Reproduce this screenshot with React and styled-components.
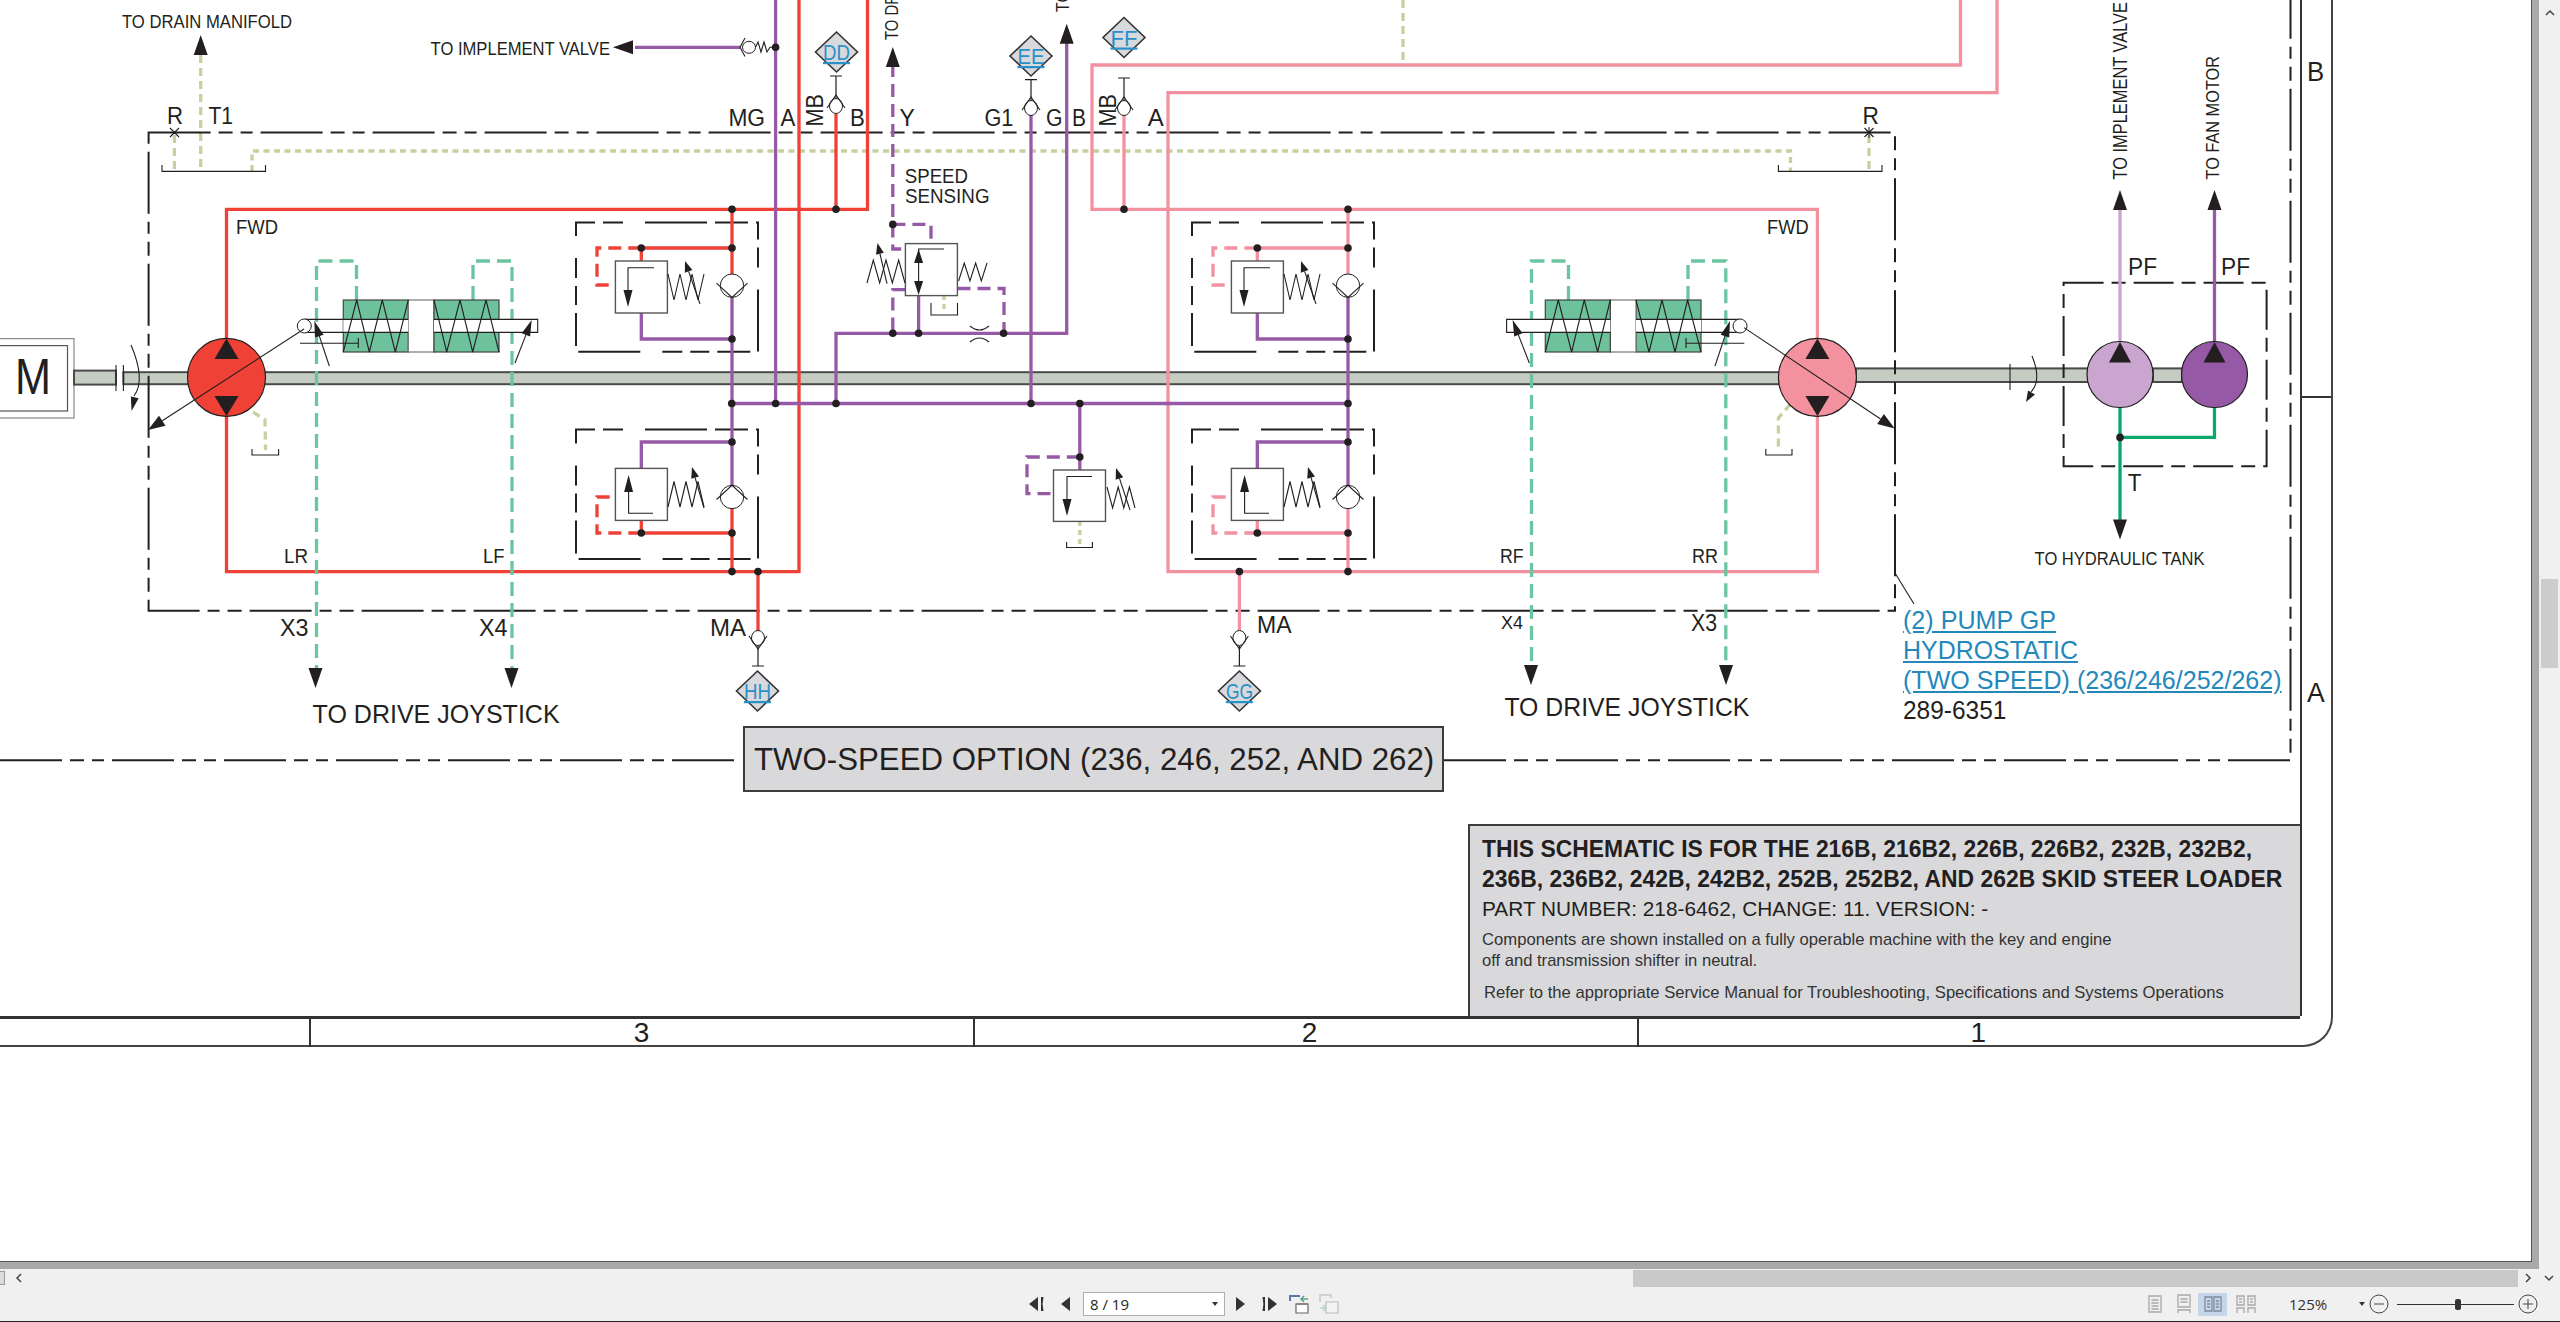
import { useLayoutEffect, useRef } from "react";
import styled, { createGlobalStyle } from "styled-components";

const Global = createGlobalStyle`
  html, body {
    margin: 0;
    height: 100%;
    overflow: hidden;
  }
  #root {
    height: 100%;
  }
`;

const tones = {
  red: "#ef4136",
  pink: "#f4919f",
  purple: "#9659a6",
  lilac: "#c9a5cf",
  teal: "#6cc5a1",
  olive: "#c5d19f",
  green: "#0aa86b",
  ink: "#231f20",
};

/* ---------- window shell ---------- */

const Page = styled.div`
  width: 2560px;
  height: 1322px;
  display: flex;
  flex-direction: column;
  background: #f0f0f0;
  font-family: "Liberation Sans", Arial, sans-serif;
  color: #231f20;
`;

const Workspace = styled.div`
  height: 1269px;
  display: flex;
`;

const Viewer = styled.div`
  width: 2539px;
  height: 1269px;
  box-sizing: border-box;
  background: #fff;
  overflow: hidden;
  border-right: 7px solid #a9a9a9;
  border-bottom: 7px solid #a9a9a9;
`;

const Paper = styled.div`
  width: 2532px;
  height: 1262px;
  box-sizing: border-box;
  background: #fff;
  border-right: 1px solid #555;
  border-bottom: 1px solid #555;
  overflow: hidden;
`;

const Sheet = styled.div`
  width: 2333px;
  height: 1047px;
  box-sizing: border-box;
  display: grid;
  grid-template-columns: 2300px 1fr;
  grid-template-rows: 1016px 1fr;
  border-right: 2px solid #444;
  border-bottom: 2px solid #444;
  border-bottom-right-radius: 30px;
`;

const Canvas = styled.div`
  position: relative;
  width: 2300px;
  height: 1016px;
`;

const Schematic = styled.svg`
  display: block;
  font-family: "Liberation Sans", Arial, sans-serif;
`;

const ZoneColumn = styled.div`
  display: grid;
  grid-template-rows: 398px 1fr;
  border-left: 2px solid #333;
`;

const ZoneRow = styled.div`
  box-sizing: border-box;
  padding-top: ${(p) => p.$top}px;
  height: ${(p) => p.$h}px;
  border-bottom: ${(p) => (p.$line ? "2px solid #333" : "none")};
  text-align: center;
  font-size: 28px;
  line-height: 28px;
`;

const ZoneStrip = styled.div`
  display: grid;
  grid-template-columns: 308.5px 664px 664px 1fr;
  border-top: 3px solid #333;
`;

const ZoneCell = styled.div`
  box-sizing: border-box;
  border-left: ${(p) => (p.$first ? "none" : "2px solid #333")};
  padding-left: ${(p) => p.$pad || 0}px;
  text-align: center;
  font-size: 28px;
  line-height: 28px;
`;

const Fit = styled.span`
  display: inline-block;
  white-space: nowrap;
  transform-origin: 0 50%;
  text-decoration: inherit;
`;

// squeezes a line to the width it has on the sheet, the pdf text runs narrow
function FitText({ width, children }) {
  const ref = useRef(null);
  useLayoutEffect(() => {
    const el = ref.current;
    el.style.transform = `scaleX(${width / el.offsetWidth})`;
  }, [width]);
  return <Fit ref={ref}>{children}</Fit>;
}

const OptionTitle = styled.div`
  position: absolute;
  left: 743px;
  top: 726px;
  width: 701px;
  height: 66px;
  box-sizing: border-box;
  padding-left: 9px;
  display: flex;
  align-items: center;
  background: #d9d9dc;
  border: 2.5px solid #3c3c3c;
  font-size: 32px;
`;

const PartLinks = styled.div`
  position: absolute;
  left: 1903px;
  top: 605px;
  font-size: 26px;
  line-height: 30px;
`;

const PartLink = styled.a`
  display: block;
  color: #2488bb;
  text-decoration: underline;
`;

const PartNumber = styled.div`
  color: #231f20;
`;

const InfoPanel = styled.div`
  position: absolute;
  left: 1468px;
  top: 823.5px;
  right: 0;
  bottom: 0;
  box-sizing: border-box;
  padding: 8px 0 0 12px;
  background: #d9d9dc;
  border: 2.5px solid #3c3c3c;
  border-bottom: none;
  border-right: none;
  color: #231f20;
`;

const InfoHead = styled.div`
  font-size: 23px;
  font-weight: bold;
  line-height: 30px;
`;

const InfoPart = styled.div`
  font-size: 21px;
  line-height: 30px;
`;

const InfoNote = styled.div`
  font-size: 17px;
  line-height: 21.5px;
  color: #333;
  margin-top: ${(p) => p.$gap || 0}px;
  margin-left: ${(p) => p.$indent || 0}px;
`;

/* ---------- scrollbars and toolbar ---------- */

const VScroll = styled.div`
  flex: 1;
  display: flex;
  flex-direction: column;
  align-items: center;
`;

const VThumb = styled.div`
  width: 17px;
  height: 89px;
  margin-top: 561px;
  background: #cdcdcd;
`;

const HScroll = styled.div`
  height: 18px;
  display: flex;
  align-items: center;
  background: #f0f0f0;
`;

const HStub = styled.div`
  width: 5px;
  height: 14px;
  box-sizing: border-box;
  background: #dcdcdc;
  border: 1px solid #999;
  border-left: none;
`;

const HThumb = styled.div`
  width: 885px;
  height: 17px;
  margin-left: auto;
  background: #c9c9c9;
`;

const Chevron = styled.svg`
  display: block;
  flex: none;
  margin: ${(p) => p.$margin || 0};
`;

const Toolbar = styled.div`
  height: 35px;
  box-sizing: border-box;
  display: flex;
  align-items: center;
  padding-left: 1029px;
  border-bottom: 1px solid #222;
`;

const Glyph = styled.svg`
  display: block;
  flex: none;
  margin-left: ${(p) => p.$left || 0}px;
`;

const PageSelect = styled.div`
  width: 142px;
  height: 24px;
  margin-left: 12px;
  box-sizing: border-box;
  padding: 0 6px;
  display: flex;
  align-items: center;
  justify-content: space-between;
  background: #fff;
  border: 1px solid #adadad;
  font-family: "Open Sans", "Noto Sans", sans-serif;
  font-size: 15px;
`;

const Caret = styled.span`
  width: 0;
  height: 0;
  border-left: 3.5px solid transparent;
  border-right: 3.5px solid transparent;
  border-top: 4px solid #333;
`;

const ViewToggle = styled.div`
  width: 29px;
  height: 23px;
  margin-left: ${(p) => p.$left || 0}px;
  display: flex;
  align-items: center;
  justify-content: center;
  background: ${(p) => (p.$on ? "#c5d6ea" : "transparent")};
`;

const ZoomValue = styled.div`
  margin-left: 29px;
  width: 70px;
  font-family: "Open Sans", "Noto Sans", sans-serif;
  font-size: 15px;
  color: #333;
`;

const ZoomTrack = styled.div`
  width: 117px;
  height: 1px;
  margin-left: 8px;
  background: #333;
  display: flex;
  align-items: center;
`;

const ZoomKnob = styled.div`
  width: 6px;
  height: 11px;
  margin-left: 58px;
  border-radius: 2px;
  background: #333;
`;

/* ---------- schematic parts ---------- */

const Pipe = styled.polyline`
  fill: none;
  stroke: ${(p) => tones[p.$tone || "ink"]};
  stroke-width: ${(p) => p.$w || 3.3};
  stroke-dasharray: ${(p) => p.$dash || "none"};
`;

const Thin = styled.path`
  fill: none;
  stroke: ${tones.ink};
  stroke-width: ${(p) => p.$w || 1.1};
`;

const Head = styled.polygon`
  fill: ${tones.ink};
`;

const Node = styled.circle`
  fill: ${tones.ink};
`;

const Bore = styled.ellipse`
  fill: #fff;
  stroke: ${tones.ink};
  stroke-width: 1;
`;

const Rotor = styled.ellipse`
  fill: ${(p) => p.$fill};
  stroke: ${tones.ink};
  stroke-width: 1.2;
`;

const Shaft = styled.rect`
  fill: #c5cdc3;
  stroke: #4a4a4a;
  stroke-width: 2;
`;

const Frame = styled.rect`
  fill: none;
  stroke: ${tones.ink};
  stroke-width: 2;
  stroke-dasharray: ${(p) => p.$dash};
`;

const ValveBody = styled.rect`
  fill: #fff;
  stroke: #555;
  stroke-width: 1.4;
`;

const Box = styled.rect`
  fill: ${(p) => p.$fill || "#fff"};
  stroke: ${(p) => p.$stroke || "none"};
  stroke-width: 1.2;
`;

const Label = styled.text`
  fill: ${tones.ink};
  font-size: ${(p) => p.$size}px;
`;

const TagText = styled.text`
  fill: #2a90c8;
  font-size: 22px;
  text-decoration: underline;
  text-anchor: middle;
`;

const TagShape = styled.polygon`
  fill: #d8d9dc;
  stroke: #333;
  stroke-width: 1.6;
`;

const BOX_DASH = "62 8 14 8 12 8";
const UNIT_DASH = "19 8 20 22 62 8 33 8";
const PILOT = "13 7";
const TEAL = "14 7";
const DRAIN = "6 4.5";

const points = (...list) => list.map((p) => p.join(",")).join(" ");

function Arrow({ x1, y1, x2, y2, len = 20, half = 7, shaft }) {
  const d = Math.hypot(x2 - x1, y2 - y1);
  const ux = (x2 - x1) / d;
  const uy = (y2 - y1) / d;
  const bx = x2 - ux * len;
  const by = y2 - uy * len;
  return (
    <>
      {shaft && <Thin d={`M${x1} ${y1}L${bx} ${by}`} />}
      <Head points={points([x2, y2], [bx - uy * half, by + ux * half], [bx + uy * half, by - ux * half])} />
    </>
  );
}

function Spring({ x1, x2, y1, y2, n = 7 }) {
  const list = Array.from({ length: n }, (_, i) => [x1 + ((x2 - x1) * i) / (n - 1), i % 2 ? y2 : y1]);
  return <Thin d={"M" + list.map((p) => p.join(" ")).join("L")} />;
}

function Tag({ x, y, text }) {
  return (
    <>
      <TagShape points={points([x, y - 20], [x + 21, y], [x, y + 20], [x - 21, y])} />
      <TagText x={x} y={y + 8} textLength="27" lengthAdjust="spacingAndGlyphs">
        {text}
      </TagText>
    </>
  );
}

// test point: stem with a tick and the little check ball, dir -1 goes up the sheet
function TestPort({ x, y, dir, tick }) {
  return (
    <>
      <Thin d={`M${x} ${y + dir * 8}L${x} ${tick}M${x - 6} ${tick}L${x + 6} ${tick}`} $w={1.2} />
      <Bore cx={x} cy={y} rx={6.5} ry={7.5} />
      <Thin d={`M${x - 9} ${y - dir * 2}L${x} ${y + dir * 11}L${x + 9} ${y - dir * 2}`} />
    </>
  );
}

function Check({ x, y, up }) {
  const s = up ? -1 : 1;
  return (
    <>
      <Bore cx={x} cy={y} rx={11.7} ry={11.7} />
      <Thin d={`M${x - 15.5} ${y - s * 2.5}L${x} ${y + s * 11.7}L${x + 15.5} ${y - s * 2.5}`} />
    </>
  );
}

function UpperRelief({ dx, tone }) {
  return (
    <g transform={`translate(${dx} 0)`}>
      <Frame x={576} y={222.4} width={182} height={129.3} $dash={UNIT_DASH} />
      <Pipe $tone={tone} points="732,209 732,274" />
      <Pipe $tone={tone} points="641.3,248 732,248" />
      <Pipe $tone={tone} points="641.3,248 641.3,261" />
      <Pipe $tone={tone} $dash={PILOT} points="641.3,248 597,248 597,285 614,285" />
      <Pipe $tone="purple" points="732,297 732,403.5" />
      <Pipe $tone="purple" points="641.3,313 641.3,339 732,339" />
      <ValveBody x={615.4} y={261} width={52} height={52} />
      <Thin d="M654 267.7L628 267.7L628 292" />
      <Arrow x1={628} y1={270} x2={628} y2={307} len={17} half={4.5} />
      <Spring x1={668} x2={704} y1={274} y2={300} />
      <Arrow x1={700} y1={304} x2={685} y2={261} len={11} half={4} shaft />
      <Check x={732} y={285.7} />
      <Node cx={732} cy={209.3} r={3.8} />
      <Node cx={732} cy={248} r={3.8} />
      <Node cx={641.3} cy={248} r={3.8} />
      <Node cx={732} cy={339} r={3.8} />
    </g>
  );
}

function LowerRelief({ dx, tone }) {
  return (
    <g transform={`translate(${dx} 0)`}>
      <Frame x={576} y={429.4} width={182} height={129.6} $dash={UNIT_DASH} />
      <Pipe $tone="purple" points="732,403.5 732,486" />
      <Pipe $tone="purple" points="641.3,468 641.3,442 732,442" />
      <Pipe $tone={tone} points="732,508 732,571.6" />
      <Pipe $tone={tone} points="641.3,520 641.3,533 732,533" />
      <Pipe $tone={tone} $dash={PILOT} points="641.3,533 597,533 597,497 614,497" />
      <ValveBody x={615.4} y={468.4} width={52} height={52} />
      <Thin d="M653 513.3L628.6 513.3L628.6 490" />
      <Arrow x1={628.6} y1={510} x2={628.6} y2={475} len={17} half={4.5} />
      <Spring x1={668} x2={704} y1={507} y2={481.5} />
      <Arrow x1={704} y1={508} x2={692} y2={467} len={11} half={4} shaft />
      <Check x={732} y={497} up />
      <Node cx={732} cy={442} r={3.8} />
      <Node cx={732} cy={533} r={3.8} />
      <Node cx={641.3} cy={533} r={3.8} />
      <Node cx={732} cy={571.6} r={3.8} />
    </g>
  );
}

function Cylinder({ mirror }) {
  return (
    <g transform={mirror ? "translate(2044.3 0) scale(-1 1)" : undefined}>
      <Box x={343.3} y={300} width={65} height={52} $fill="#6dc19b" $stroke="#444" />
      <Box x={408.3} y={300} width={25.7} height={52} $stroke="#777" />
      <Box x={434} y={300} width={65} height={52} $fill="#6dc19b" $stroke="#444" />
      <Box x={343.3} y={319.4} width={65} height={13} />
      <Box x={434} y={319.4} width={103.7} height={13} />
      <Thin d="M304.3 319.4L408.3 319.4M304.3 332.4L408.3 332.4M434 319.4L537.7 319.4L537.7 332.4L434 332.4" />
      <Thin d="M343.3 352L356.7 300L369.3 352L382.3 300L395.3 352L408.3 300" />
      <Thin d="M434 300L446.7 352L460 300L472.7 352L486 300L499 352" />
      <Thin d="M300 343.3L358.3 343.3M358.3 338L358.3 348" />
      <Bore cx={304.3} cy={326} rx={7} ry={7} />
      <Arrow x1={329.3} y1={366} x2={314.3} y2={321} len={16} half={4.5} shaft />
      <Arrow x1={515} y1={363} x2={531.7} y2={320} len={16} half={4.5} shaft />
    </g>
  );
}

function Pump({ x, fill }) {
  return (
    <>
      <Rotor cx={x} cy={377.4} rx={39} ry={39} $fill={fill} />
      <Head points={points([x, 338.6], [x + 12, 359], [x - 12, 359])} />
      <Head points={points([x, 416], [x + 12, 396], [x - 12, 396])} />
    </>
  );
}

const labels = [
  ["TO DRAIN MANIFOLD", 122, 21, 19, 170],
  ["TO IMPLEMENT VALVE", 430.6, 48, 19, 179.4],
  ["R", 167, 116, 23, 16],
  ["T1", 208.4, 116, 23, 24.6],
  ["MG", 728.4, 117.5, 23, 36.7],
  ["A", 780.5, 118, 23, 14.8],
  ["B", 850, 118, 23, 14.8],
  ["Y", 899.4, 118, 23, 15.3],
  ["G1", 984.4, 118, 23, 29],
  ["G", 1046, 118, 23, 16.5],
  ["B", 1072, 118, 23, 14],
  ["A", 1147.8, 118, 23, 16],
  ["R", 1862.4, 116, 23, 16.4],
  ["SPEED", 904.8, 175.4, 20, 63.2],
  ["SENSING", 905, 196, 20, 84.5],
  ["FWD", 236, 226.5, 19.5, 42],
  ["FWD", 1767, 227, 19.5, 41.6],
  ["LR", 284, 555.7, 19.5, 24],
  ["LF", 483, 555.7, 19.5, 21.6],
  ["RF", 1500, 555.7, 19.5, 23.6],
  ["RR", 1692, 555.7, 19.5, 26],
  ["X3", 280, 628, 23, 28.5],
  ["X4", 479, 628, 23, 28.5],
  ["MA", 710, 628, 23, 36],
  ["MA", 1257, 625, 23, 34.5],
  ["X4", 1501, 622.7, 18, 22],
  ["X3", 1691, 622.7, 23, 26],
  ["TO DRIVE JOYSTICK", 312.6, 714, 25, 247],
  ["TO DRIVE JOYSTICK", 1504.4, 707, 25, 245],
  ["PF", 2128, 266.4, 23, 29],
  ["PF", 2221, 266.4, 23, 29],
  ["T", 2127.8, 482.7, 23, 13.7],
  ["TO HYDRAULIC TANK", 2034.6, 557.8, 19, 170],
];

const risers = [
  ["MB", 822.7, 126.5, 24, 32.5],
  ["MB", 1116, 126.5, 24, 32.5],
  ["TO DRIVE JOYSTICK", 898, 40, 18, 147],
  ["TO FAN MOTOR", 1069.4, 12, 18, 120],
  ["TO IMPLEMENT VALVE", 2126.7, 179.5, 20, 177.5],
  ["TO FAN MOTOR", 2219.4, 179.5, 19, 123.5],
];

function Diagram() {
  return (
    <Schematic width="2300" height="1016" viewBox="0 0 2300 1016">
      {/* motor and drive shafts */}
      <Box x={-2} y={338.6} width={76} height={79.4} $stroke="#888" />
      <Box x={-2} y={345.6} width={69.5} height={65.4} $stroke="#555" />
      <Label $size={50} x={15} y={394} textLength="36" lengthAdjust="spacingAndGlyphs">M</Label>
      <Shaft x={74} y={370.6} width={42} height={14} />
      <Shaft x={123.4} y={372.2} width={70} height={12} />
      <Shaft x={262} y={372.2} width={1526} height={12} />
      <Shaft x={1856} y={368.4} width={232} height={13.6} />
      <Shaft x={2153} y={368.4} width={29} height={13.6} />
      <Thin d="M116 365L116 391M123.4 365L123.4 391M2010 364L2010 390" />
      <Thin d="M131 345Q146 380 134 396" />
      <Arrow x1={136} y1={392} x2={131.6} y2={411} len={14} half={4} />
      <Thin d="M2032 356Q2042 380 2031 392" />
      <Arrow x1={2033} y1={390} x2={2026} y2={402} len={11} half={4} />

      {/* case drain */}
      <Pipe $tone="olive" $dash={DRAIN} points="252,171 252,151 1790.5,151 1790.5,171" />
      <Pipe $tone="olive" $dash="8 5" points="174.4,135 174.4,171" />
      <Pipe $tone="olive" $dash="8 5" points="200.7,55 200.7,171" />
      <Pipe $tone="olive" $dash="8 5" points="1869,135 1869,171" />
      <Pipe $tone="olive" $dash="8 5" points="1403,0 1403,65" />
      <Pipe $tone="olive" $dash="8 5" points="253,412 265,420 265.5,450" />
      <Pipe $tone="olive" $dash="8 5" points="1790.5,404 1778.4,418 1778.4,450" />
      <Pipe $tone="olive" $dash="5 4" points="944,295 944,309" />
      <Pipe $tone="olive" $dash="5 4" points="1079.8,521 1079.8,546" />
      <Thin d="M162 165L162 171.4L265.5 171.4L265.5 165M1778.4 165L1778.4 171.4L1882 171.4L1882 165" />
      <Thin d="M252 449L252 455L278.6 455L278.6 449M1765.8 449L1765.8 455L1792 455L1792 449" />
      <Thin d="M931 303L931 315L957.5 315L957.5 303M1066.6 542L1066.6 547.5L1092.4 547.5L1092.4 542" />
      <Arrow x1={200.7} y1={60} x2={200.7} y2={35} />
      <Thin d="M170 128L179 137M179 128L170 137M1864.5 128L1873.5 137M1873.5 128L1864.5 137M1869 127L1869 138" />

      {/* machine outline */}
      <Frame x={148.6} y={132.6} width={1746.4} height={478.2} $dash={BOX_DASH} />
      <Frame x={2063.6} y={282.7} width={203} height={183.6} $dash="40 8 14 8" />
      <Pipe $w={2} $dash={BOX_DASH} points="0,760.3 742,760.3" />
      <Pipe $w={2} $dash={BOX_DASH} points="1444,760.3 2290.5,760.3 2290.5,0" />
      <Thin d="M1895 573L1914 604" />

      {/* pressure loops */}
      <Pipe $tone="red" points="226.5,340 226.5,209.3 867.5,209.3 867.5,0" />
      <Pipe $tone="red" points="226.5,415 226.5,571.6 799,571.6 799,0" />
      <Pipe $tone="red" points="836,209.3 836,114" />
      <Pipe $tone="red" points="758,571.6 758,631" />
      <Pipe $tone="pink" points="1817.4,340 1817.4,209.3 1092,209.3 1092,65 1960.5,65 1960.5,0" />
      <Pipe $tone="pink" points="1817.4,415 1817.4,571.6 1168,571.6 1168,92.6 1997,92.6 1997,0" />
      <Pipe $tone="pink" points="1124,114 1124,209.3" />
      <Pipe $tone="pink" points="1239.4,571.6 1239.4,631" />
      <Pipe $tone="purple" points="775.6,0 775.6,403.5" />
      <Pipe $tone="purple" points="731.7,403.5 1348,403.5" />
      <Pipe $tone="purple" points="836,403.5 836,333.3 1066.7,333.3 1066.7,40" />
      <Pipe $tone="purple" points="1031,114 1031,403.5" />
      <Pipe $tone="purple" points="635,47.3 740,47.3" />
      <Pipe $tone="purple" points="918.6,295 918.6,333.3" />
      <Pipe $tone="purple" points="1079.8,403.5 1079.8,470" />
      <Pipe $tone="purple" $dash={PILOT} points="892.8,64 892.8,224.4 931,224.4 931,243.6" />
      <Pipe $tone="purple" $dash={PILOT} points="892.8,224.4 892.8,249 905,249" />
      <Pipe $tone="purple" $dash={PILOT} points="905,289.7 892.8,289.7 892.8,333.3" />
      <Pipe $tone="purple" $dash={PILOT} points="957.5,288.5 1004,288.5 1004,333.3" />
      <Pipe $tone="purple" $dash={PILOT} points="1079.8,457 1027,457 1027,493.7 1053.5,493.7" />

      <Pipe $tone="teal" $dash={TEAL} points="356.5,300 356.5,261 316.5,261 316.5,668" />
      <Pipe $tone="teal" $dash={TEAL} points="473,300 473,261 512,261 512,668" />
      <Pipe $tone="teal" $dash={TEAL} points="1688,300 1688,261 1725.8,261 1725.8,665" />
      <Pipe $tone="teal" $dash={TEAL} points="1568.5,300 1568.5,261 1531.5,261 1531.5,665" />
      <Arrow x1={315.5} y1={660} x2={315.5} y2={688} />
      <Arrow x1={511.5} y1={660} x2={511.5} y2={688} />
      <Arrow x1={1531} y1={660} x2={1531} y2={685} />
      <Arrow x1={1726} y1={660} x2={1726} y2={685} />

      <Cylinder />
      <Cylinder mirror />

      <UpperRelief dx={0} tone="red" />
      <LowerRelief dx={0} tone="red" />
      <UpperRelief dx={616} tone="pink" />
      <LowerRelief dx={616} tone="pink" />

      {/* speed sensing valve */}
      <ValveBody x={905.4} y={243.6} width={52} height={52} />
      <Thin d="M944 249L918.6 249L918.6 290" />
      <Arrow x1={918.6} y1={270} x2={918.6} y2={249} len={14} half={4.5} />
      <Arrow x1={918.6} y1={272} x2={918.6} y2={295} len={14} half={4.5} />
      <Spring x1={905} x2={867} y1={283} y2={260} />
      <Arrow x1={887} y1={283.6} x2={877.4} y2={243} len={11} half={4} shaft />
      <Spring x1={958.6} x2={987} y1={281} y2={263} n={6} />
      <Thin d="M970 326Q979.4 334 989 326M970 342Q979.4 334 989 342" />

      {/* centre relief */}
      <ValveBody x={1053.5} y={470} width={52} height={51.4} />
      <Thin d="M1092 476.5L1067 476.5L1067 500" />
      <Arrow x1={1067} y1={490} x2={1067} y2={516} len={17} half={4.5} />
      <Spring x1={1107} x2={1135} y1={487} y2={508} n={6} />
      <Arrow x1={1130} y1={510} x2={1116} y2={468} len={11} half={4} shaft />

      {/* test ports */}
      <TestPort x={836} y={106} dir={-1} tick={76} />
      <TestPort x={1031} y={108} dir={-1} tick={79.6} />
      <TestPort x={1124} y={108} dir={-1} tick={78} />
      <TestPort x={758} y={638} dir={1} tick={666} />
      <TestPort x={1239.4} y={638} dir={1} tick={666} />
      <Tag x={836.5} y={52} text="DD" />
      <Tag x={1031} y={56} text="EE" />
      <Tag x={1124} y={37.5} text="FF" />
      <Tag x={757.5} y={691} text="HH" />
      <Tag x={1239.4} y={691} text="GG" />

      {/* implement valve feed */}
      <Arrow x1={635} y1={47.3} x2={613} y2={47.3} />
      <Bore cx={749} cy={47.3} rx={6.5} ry={6} />
      <Thin d="M745 38L740 47.3L745 56.6M755.5 47.3L758 42L761 52L764 42L767 52L770 47.3L775.6 47.3" />
      <Arrow x1={892.8} y1={67} x2={892.8} y2={47} />
      <Arrow x1={1066.7} y1={43} x2={1066.7} y2={23.7} />

      {/* pumps */}
      <Pump x={226.5} fill="#ef4136" />
      <Pump x={1817.4} fill="#f4919f" />
      <Arrow x1={304} y1={329} x2={148} y2={430} len={17} half={6} shaft />
      <Arrow x1={1744} y1={327.6} x2={1894.7} y2={428.4} len={17} half={6} shaft />

      <Pipe $tone="lilac" points="2120,342 2120,205" />
      <Pipe $tone="purple" points="2214.5,342 2214.5,205" />
      <Pipe $tone="green" points="2120,407 2120,522" />
      <Pipe $tone="green" points="2120,437.4 2214.5,437.4 2214.5,407" />
      <Rotor cx={2120} cy={374.5} rx={33} ry={33} $fill="#c9a5cf" />
      <Rotor cx={2214.5} cy={374.5} rx={33} ry={33} $fill="#9659a6" />
      <Head points={points([2120, 342], [2131, 362.5], [2109, 362.5])} />
      <Head points={points([2214.5, 342], [2225.5, 362.5], [2203.5, 362.5])} />
      <Node cx={2120} cy={437.4} r={3.8} />
      <Arrow x1={2120} y1={215} x2={2120} y2={190} />
      <Arrow x1={2214.5} y1={215} x2={2214.5} y2={190} />
      <Arrow x1={2120} y1={515} x2={2120} y2={539.5} />

      {[[892.8, 224.4], [892.8, 333.3], [918.6, 333.3], [1003.6, 333.3], [775.6, 47.3], [775.6, 403.5], [836, 403.5],
        [836, 209.3], [1031, 403.5], [1079.8, 403.5], [1079.8, 457], [1124, 209.3], [731.7, 403.5], [1348, 403.5],
        [758, 571.6], [1239.4, 571.6]].map(([cx, cy]) => (
        <Node key={`${cx}-${cy}`} cx={cx} cy={cy} r={3.8} />
      ))}

      {labels.map(([text, x, yc, size, w]) => (
        <Label key={`${text}-${x}`} $size={size} x={x} y={yc + size * 0.36} textLength={w} lengthAdjust="spacingAndGlyphs">
          {text}
        </Label>
      ))}
      {risers.map(([text, x, y, size, w]) => (
        <Label
          key={`${text}-${x}`}
          $size={size}
          transform={`translate(${x} ${y}) rotate(-90)`}
          textLength={w}
          lengthAdjust="spacingAndGlyphs"
        >
          {text}
        </Label>
      ))}
    </Schematic>
  );
}

function SideChevron({ d, margin, w = 10, h = 10 }) {
  return (
    <Chevron $margin={margin} width={w} height={h} viewBox="0 0 10 10">
      <path d={d} fill="none" stroke="#444" strokeWidth="1.5" />
    </Chevron>
  );
}

function PageIcon({ kind }) {
  const stroke = kind === "on" ? "#7d8a99" : "#a8a8a8";
  return (
    <svg width="20" height="20" viewBox="0 0 20 20" fill="none" stroke={stroke} strokeWidth="1.3">
      {kind === "single" && <path d="M4 2H16V18H4ZM6.5 6H13.5M6.5 9H13.5M6.5 12H13.5M6.5 15H13.5" />}
      {kind === "scroll" && <path d="M4 1H16V13H4ZM6.5 5H13.5M6.5 8H13.5M4 19V16H16V19" />}
      {kind === "on" && <path d="M2 3H9V17H2ZM11 3H18V17H11ZM4 7H7M4 10H7M4 13H7M13 7H16M13 10H16M13 13H16" />}
      {kind === "spread" && <path d="M1 2H8V11H1ZM12 2H19V11H12ZM1 19V14H8V19M12 19V14H19V19M3 5H6M14 5H17M3 8H6M14 8H17" />}
    </svg>
  );
}

export default function App() {
  return (
    <>
      <Global />
      <Page>
        <Workspace>
          <Viewer>
            <Paper>
              <Sheet>
                <Canvas>
                  <Diagram />
                  <OptionTitle>
                    <FitText width={680}>TWO-SPEED OPTION (236, 246, 252, AND 262)</FitText>
                  </OptionTitle>
                  <PartLinks>
                    <PartLink>
                      <FitText width={152.5}>(2) PUMP GP</FitText>
                    </PartLink>
                    <PartLink>
                      <FitText width={174.5}>HYDROSTATIC</FitText>
                    </PartLink>
                    <PartLink>
                      <FitText width={378.5}>(TWO SPEED) (236/246/252/262)</FitText>
                    </PartLink>
                    <PartNumber>
                      <FitText width={103.5}>289-6351</FitText>
                    </PartNumber>
                  </PartLinks>
                  <InfoPanel>
                    <InfoHead>
                      <FitText width={770}>THIS SCHEMATIC IS FOR THE 216B, 216B2, 226B, 226B2, 232B, 232B2,</FitText>
                    </InfoHead>
                    <InfoHead>
                      <FitText width={800}>236B, 236B2, 242B, 242B2, 252B, 252B2, AND 262B SKID STEER LOADER</FitText>
                    </InfoHead>
                    <InfoPart>
                      <FitText width={506.5}>PART NUMBER: 218-6462, CHANGE: 11. VERSION: -</FitText>
                    </InfoPart>
                    <InfoNote $gap={5}>
                      <FitText width={630}>Components are shown installed on a fully operable machine with the key and engine</FitText>
                    </InfoNote>
                    <InfoNote>
                      <FitText width={275}>off and transmission shifter in neutral.</FitText>
                    </InfoNote>
                    <InfoNote $gap={10} $indent={2}>
                      <FitText width={740}>Refer to the appropriate Service Manual for Troubleshooting, Specifications and Systems Operations</FitText>
                    </InfoNote>
                  </InfoPanel>
                </Canvas>
                <ZoneColumn>
                  <ZoneRow $h={398} $top={58} $line>
                    <FitText width={17.5}>B</FitText>
                  </ZoneRow>
                  <ZoneRow $h={618} $top={281}>
                    <FitText width={18}>A</FitText>
                  </ZoneRow>
                </ZoneColumn>
                <ZoneStrip>
                  <ZoneCell $first />
                  <ZoneCell>3</ZoneCell>
                  <ZoneCell $pad={8}>2</ZoneCell>
                  <ZoneCell $pad={18}>1</ZoneCell>
                </ZoneStrip>
              </Sheet>
            </Paper>
          </Viewer>
          <VScroll>
            <SideChevron d="M1 7L5 3L9 7" margin="8px 0 0" />
            <VThumb />
          </VScroll>
        </Workspace>
        <HScroll>
          <HStub />
          <SideChevron d="M7 1L3 5L7 9" margin="0 0 0 9px" />
          <HThumb />
          <SideChevron d="M3 1L7 5L3 9" margin="0 3px 0 5px" />
          <SideChevron d="M1 3L5 7L9 3" margin="0 6px 0 8px" />
        </HScroll>
        <Toolbar>
          <Glyph width="16" height="16" viewBox="0 0 16 16">
            <path d="M9 1V15L0 8ZM12 1H14.5L13.6 8L14.5 15H12Z" fill="#333" />
          </Glyph>
          <Glyph $left={16} width="10" height="16" viewBox="0 0 10 16">
            <path d="M9 1V15L0 8Z" fill="#333" />
          </Glyph>
          <PageSelect>
            <span>8 / 19</span>
            <Caret />
          </PageSelect>
          <Glyph $left={10} width="10" height="16" viewBox="0 0 10 16">
            <path d="M1 1V15L10 8Z" fill="#333" />
          </Glyph>
          <Glyph $left={16} width="16" height="16" viewBox="0 0 16 16">
            <path d="M7 1V15L16 8ZM1.5 1H4V15H1.5L2.4 8Z" fill="#333" />
          </Glyph>
          <Glyph $left={12} width="20" height="20" viewBox="0 0 20 20">
            <path d="M1 7V2H11" fill="none" stroke="#5a79a8" strokeWidth="2" />
            <path d="M7 10H19V19H7Z" fill="#fff" stroke="#666" strokeWidth="1.2" />
            <path d="M7 10H19" stroke="#888" strokeWidth="2" />
            <path d="M19 5H12M15 2L12 5L15 8" fill="none" stroke="#5aa58a" strokeWidth="1.5" />
          </Glyph>
          <Glyph $left={10} width="20" height="20" viewBox="0 0 20 20">
            <path d="M1 8V1H12V4" fill="none" stroke="#c8c8c8" strokeWidth="1.5" />
            <path d="M7 8H19V19H7Z" fill="#f4f4f4" stroke="#bbb" strokeWidth="1.2" />
            <path d="M1 14H7M4 11L7 14L4 17" fill="none" stroke="#bcd4ca" strokeWidth="1.5" />
          </Glyph>
          <ViewToggle $left={801}>
            <PageIcon kind="single" />
          </ViewToggle>
          <ViewToggle>
            <PageIcon kind="scroll" />
          </ViewToggle>
          <ViewToggle $on>
            <PageIcon kind="on" />
          </ViewToggle>
          <ViewToggle $left={4}>
            <PageIcon kind="spread" />
          </ViewToggle>
          <ZoomValue>125%</ZoomValue>
          <Caret />
          <Glyph $left={4} width="20" height="20" viewBox="0 0 20 20">
            <circle cx="10" cy="10" r="9" fill="none" stroke="#444" strokeWidth="1" />
            <path d="M5 10H15" stroke="#444" strokeWidth="1" />
          </Glyph>
          <ZoomTrack>
            <ZoomKnob />
          </ZoomTrack>
          <Glyph $left={4} width="20" height="20" viewBox="0 0 20 20">
            <circle cx="10" cy="10" r="9" fill="none" stroke="#444" strokeWidth="1" />
            <path d="M5 10H15M10 5V15" stroke="#444" strokeWidth="1" />
          </Glyph>
        </Toolbar>
      </Page>
    </>
  );
}
